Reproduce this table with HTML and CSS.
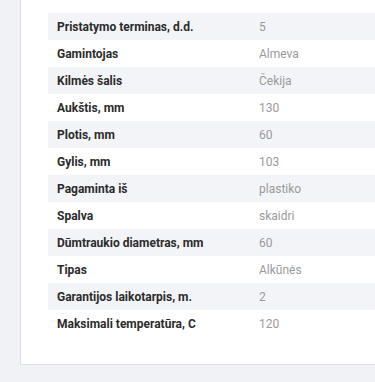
FILE: index.html
```html
<!DOCTYPE html>
<html lang="lt">
<head>
<meta charset="utf-8">
<link rel="stylesheet" href="styles.css">
</head>
<body>
<div class="card">
  <table class="specs">
    <tr><th>Pristatymo terminas, d.d.</th><td>5</td></tr>
    <tr><th>Gamintojas</th><td>Almeva</td></tr>
    <tr><th>Kilmės šalis</th><td>Čekija</td></tr>
    <tr><th>Aukštis, mm</th><td>130</td></tr>
    <tr><th>Plotis, mm</th><td>60</td></tr>
    <tr><th>Gylis, mm</th><td>103</td></tr>
    <tr><th>Pagaminta iš</th><td>plastiko</td></tr>
    <tr><th>Spalva</th><td>skaidri</td></tr>
    <tr><th>Dūmtraukio diametras, mm</th><td>60</td></tr>
    <tr><th>Tipas</th><td>Alkūnės</td></tr>
    <tr><th>Garantijos laikotarpis, m.</th><td>2</td></tr>
    <tr><th>Maksimali temperatūra, C</th><td>120</td></tr>
  </table>
</div>
</body>
</html>
```

FILE: styles.css
```css
html, body {
  margin: 0;
  padding: 0;
}
body {
  background: #f1f2f6;
  font-family: Roboto, "Liberation Sans", sans-serif;
  overflow: hidden;
  height: 382px;
}
.card {
  margin-left: 20px;
  background: #fff;
  border-left: 1px solid #e0e1e5;
  border-bottom: 1px solid #e0e1e5;
  padding: 13px 0 27px 27px;
}
.specs {
  width: 100%;
  border-collapse: collapse;
}
.specs tr {
  height: 27px;
}
.specs tr:nth-child(odd) {
  background: #f3f4f7;
}
.specs th {
  width: 202px;
  padding: 0 0 0 9px;
  text-align: left;
  font-size: 12px;
  font-weight: 700;
  color: #2b2b2b;
}
.specs td {
  padding: 0;
  font-size: 12px;
  color: #9a9a9a;
}
```
